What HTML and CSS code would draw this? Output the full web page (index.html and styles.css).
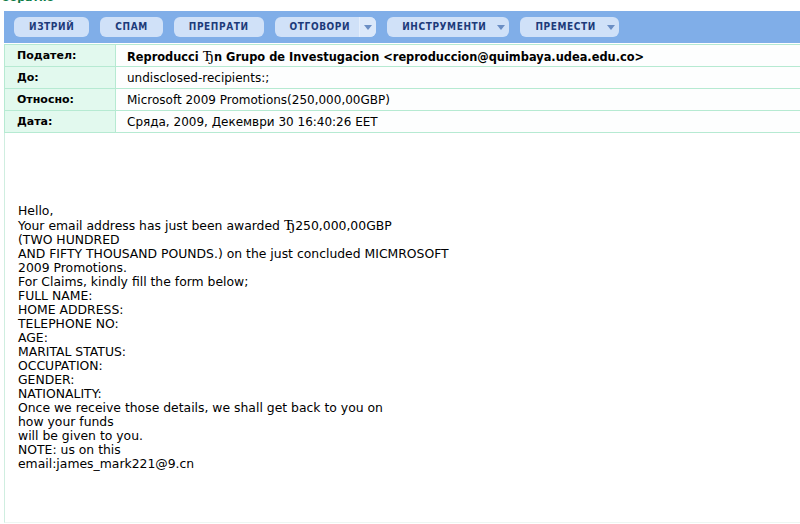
FILE: index.html
```html
<!DOCTYPE html>
<html lang="bg">
<head>
    <meta charset="UTF-8">
    <title>Поща</title>
    <link rel="stylesheet" href="styles.css">
</head>
<body>
    <div class="backlink"><span>обратно</span></div>

    <div class="toolbar">
        <span class="btn">ИЗТРИЙ</span>
        <span class="btn">СПАМ</span>
        <span class="btn">ПРЕПРАТИ</span>
        <span class="btn split">ОТГОВОРИ<span class="seg"><i class="arrow"></i></span></span>
        <span class="btn drop">ИНСТРУМЕНТИ<i class="arrow"></i></span>
        <span class="btn drop">ПРЕМЕСТИ<i class="arrow"></i></span>
    </div>

    <div class="headers">
        <div class="label">Подател:</div>
        <div class="value strong">Reproducci<span class="odd">Ђ</span>n Grupo de Investugacion &lt;reproduccion@quimbaya.udea.edu.co&gt;</div>
        <div class="label">До:</div>
        <div class="value">undisclosed-recipients:;</div>
        <div class="label">Относно:</div>
        <div class="value">Microsoft 2009 Promotions(250,000,00GBP)</div>
        <div class="label">Дата:</div>
        <div class="value">Сряда, 2009, Декември 30 16:40:26 EET</div>
    </div>

    <div class="message">
        Hello,<br>
        Your email address has just been awarded <span class="odd big">Ђ</span>250,000,00GBP<br>
        (TWO HUNDRED<br>
        AND FIFTY THOUSAND POUNDS.) on the just concluded MICMROSOFT<br>
        2009 Promotions.<br>
        For Claims, kindly fill the form below;<br>
        FULL NAME:<br>
        HOME ADDRESS:<br>
        TELEPHONE NO:<br>
        AGE:<br>
        MARITAL STATUS:<br>
        OCCUPATION:<br>
        GENDER:<br>
        NATIONALITY:<br>
        Once we receive those details, we shall get back to you on<br>
        how your funds<br>
        will be given to you.<br>
        NOTE: us on this<br>
        email:james_mark221@9.cn
    </div>
</body>
</html>
```

FILE: styles.css
```css
body {
    margin: 0;
    font-family: "DejaVu Sans", Verdana, sans-serif;
    background: #fff;
    color: #000;
}
.backlink {
    height: 4px;
    overflow: hidden;
    padding-left: 2px;
}
.backlink span {
    display: block;
    margin-top: -9px;
    font-size: 11px;
    font-weight: bold;
    color: #0b7a44;
}
.toolbar {
    margin: 7px 0 1px 4px;
    height: 32px;
    background: #80aee8;
    display: flex;
    align-items: center;
    gap: 11px;
    padding-left: 10px;
}
.btn {
    height: 20px;
    line-height: 20px;
    padding: 0 15px;
    background: #d0e1f8;
    border-radius: 6px;
    color: #1d3b7a;
    font-family: "DejaVu Sans Condensed", "DejaVu Sans", sans-serif;
    font-stretch: condensed;
    font-size: 10px;
    font-weight: bold;
    letter-spacing: 0.6px;
    display: flex;
    align-items: center;
}
.btn.split {
    padding-right: 0;
    overflow: hidden;
}
.btn.drop {
    padding-right: 4px;
}
.seg {
    height: 20px;
    margin-left: 9px;
    padding: 0 4px 0 4px;
    border-left: 1px solid #e4eefc;
    background: #dbe8fa;
    display: flex;
    align-items: center;
}
.arrow {
    width: 0;
    height: 0;
    border-left: 4px solid transparent;
    border-right: 4px solid transparent;
    border-top: 5px solid #6b8ec4;
    margin-left: 11px;
}
.seg .arrow {
    margin-left: 0;
}
.headers {
    margin-left: 4px;
    border-left: 1px solid #b6ead2;
    border-top: 1px solid #b6ead2;
    display: grid;
    grid-template-columns: 111px 1fr;
    font-size: 11px;
}
.label, .value {
    height: 21px;
    line-height: 22px;
    border-bottom: 1px solid #b6ead2;
}
.label {
    background: #e2f9ee;
    border-right: 1px solid #b6ead2;
    padding-left: 12px;
    font-weight: bold;
}
.value {
    padding-left: 11px;
    background: #fdfefe;
    font-size: 12px;
}
.strong {
    font-weight: bold;
    font-size: 11.4px;
}
.odd {
    font-family: "Liberation Serif", serif;
    font-weight: normal;
    font-size: 15px;
    margin-left: 4px;
}
.odd.big {
    margin-left: 0;
}
.message {
    margin-left: 4px;
    height: 318px;
    border-left: 1px solid #cfeee0;
    border-bottom: 1px solid #eef6f2;
    padding: 71px 0 0 13px;
    font-size: 12.4px;
    line-height: 14px;
}
```
